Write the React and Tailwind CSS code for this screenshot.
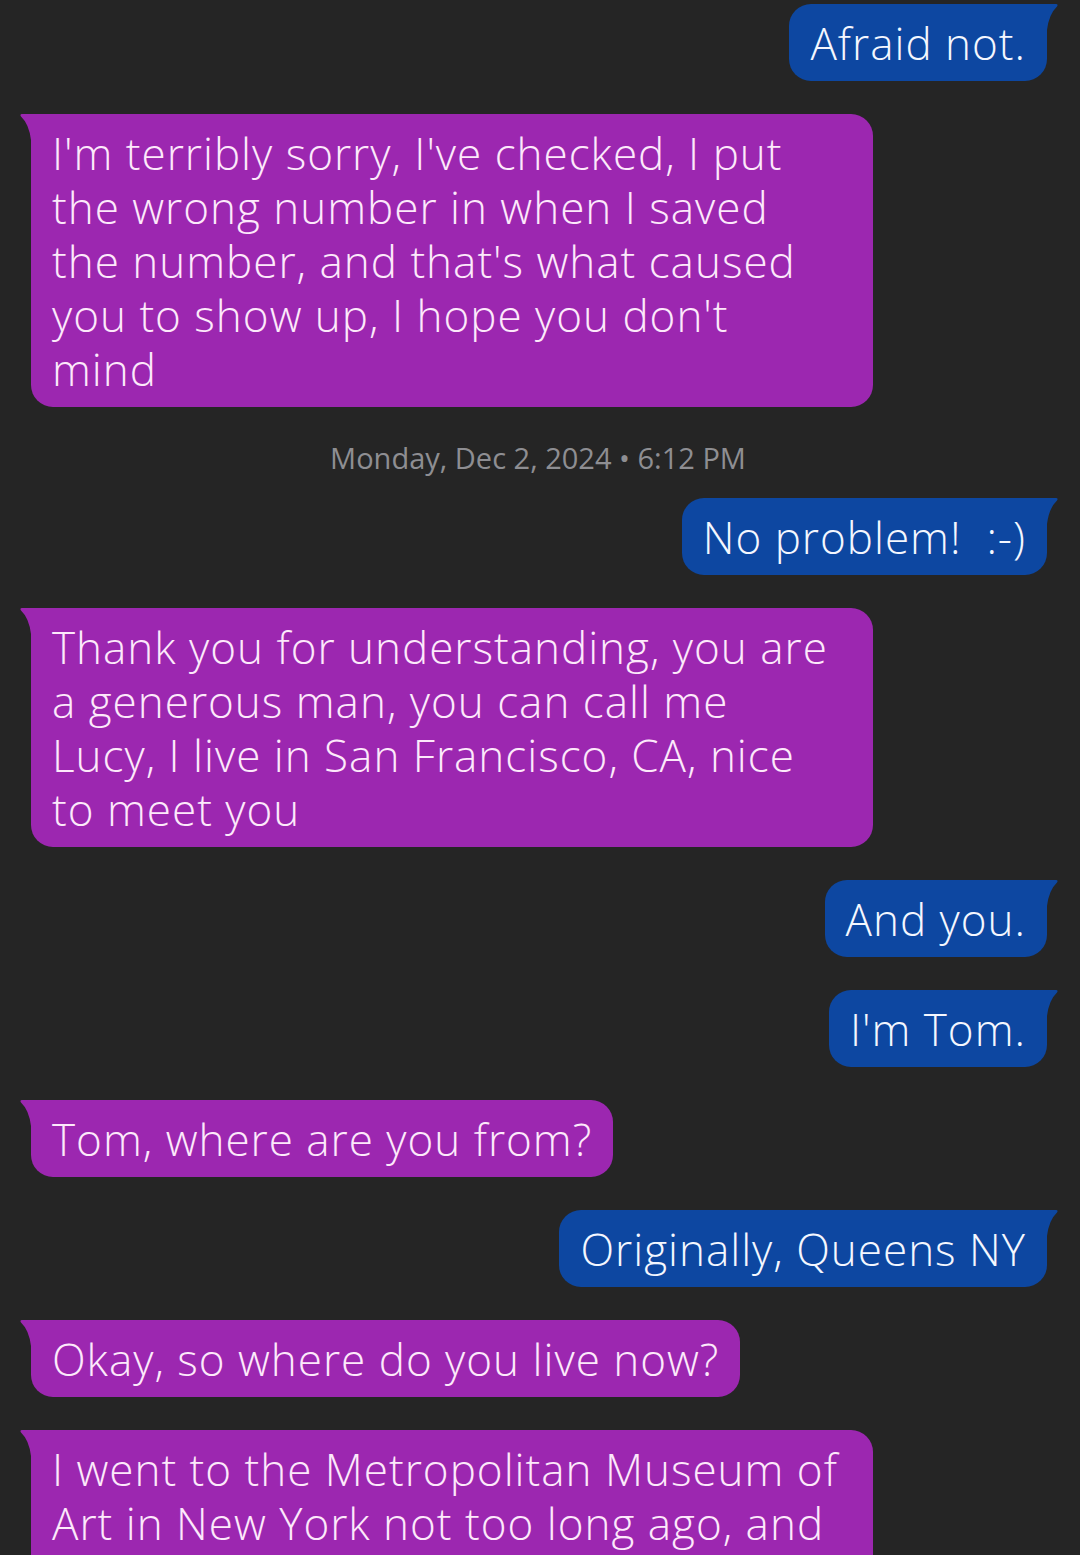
import React from 'react';

const SENT = '#0d47a1';
const RECV = '#9c27b0';

const Bubble = ({ sent, lines, wide }) => {
    return (
        <div
            className={`relative px-[21px] py-[11.5px] text-[44px] leading-[54px] tracking-[1px] font-light rounded-[22px] ${sent
                ? 'self-end bg-[#0d47a1] text-[#f4f7ff] rounded-tr-none'
                : 'self-start bg-[#9c27b0] text-[#fde9fb] rounded-tl-none'
                } ${wide ? 'w-[842px]' : ''}`}
        >
            {/* tail */}
            {sent ? (
                <svg className="absolute top-0 right-[-11px]" width="11" height="26" viewBox="0 0 11 26">
                    <path d="M0 0 H9 Q11.5 0 10 2.5 Q2 10 0 26 Z" fill={SENT} />
                </svg>
            ) : (
                <svg className="absolute top-0 left-[-11px]" width="11" height="26" viewBox="0 0 11 26">
                    <path d="M11 0 H2 Q-0.5 0 1 2.5 Q9 10 11 26 Z" fill={RECV} />
                </svg>
            )}
            {lines.map((l, i) => (
                <div key={i} className="whitespace-pre">{l}</div>
            ))}
        </div>
    );
};

export default function App() {
    return (
        <div
            className="w-[1080px] h-[1555px] overflow-hidden bg-[#252525] flex flex-col gap-[33px] pl-[31px] pr-[33px] pt-[4px]"
            style={{ fontFamily: '"Open Sans", "Noto Sans", sans-serif' }}
        >
            <Bubble sent lines={['Afraid not.']} />
            <Bubble
                wide
                lines={[
                    "I'm terribly sorry, I've checked, I put",
                    'the wrong number in when I saved',
                    "the number, and that's what caused",
                    "you to show up, I hope you don't",
                    'mind',
                ]}
            />
            <div className="text-center text-[29px] leading-[36px] text-[#8e8e92] -mb-[11px] pr-[2px]">
                Monday, Dec 2, 2024 • 6:12 PM
            </div>
            <Bubble sent lines={['No problem!  :-)']} />
            <Bubble
                wide
                lines={[
                    'Thank you for understanding, you are',
                    'a generous man, you can call me',
                    'Lucy, I live in San Francisco, CA, nice',
                    'to meet you',
                ]}
            />
            <Bubble sent lines={['And you.']} />
            <Bubble sent lines={["I'm Tom."]} />
            <Bubble lines={['Tom, where are you from?']} />
            <Bubble sent lines={['Originally, Queens NY']} />
            <Bubble lines={['Okay, so where do you live now?']} />
            <Bubble
                wide
                lines={[
                    'I went to the Metropolitan Museum of',
                    'Art in New York not too long ago, and',
                    'it was amazing',
                ]}
            />
        </div>
    );
}
